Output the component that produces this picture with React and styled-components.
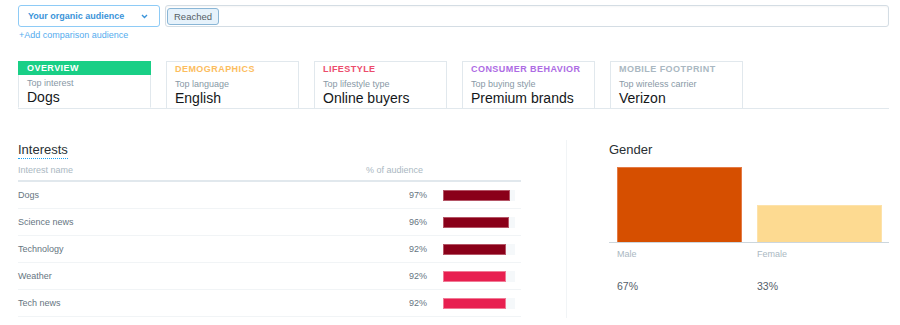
import React from 'react';
import styled, { createGlobalStyle } from 'styled-components';

const Global = createGlobalStyle`
  body {
    margin: 0;
    background: #fff;
    font-family: "Liberation Sans", Arial, sans-serif;
    color: #292f33;
  }
`;

const Page = styled.div`
  padding: 5px 11px 0 18px;
`;

const TopRow = styled.div`
  display: flex;
  align-items: flex-start;
  gap: 5px;
`;

const Select = styled.div`
  box-sizing: border-box;
  width: 142px;
  height: 22px;
  border: 1px solid #8ecbf6;
  border-radius: 3px;
  display: flex;
  align-items: center;
  justify-content: space-between;
  padding: 0 11px 0 9px;
  font-size: 9px;
  font-weight: bold;
  color: #3b94d9;
`;

const Search = styled.div`
  box-sizing: border-box;
  flex: 1;
  height: 22px;
  border: 1px solid #d4dde4;
  border-radius: 3px;
  box-shadow: inset 0 1px 2px rgba(0,0,0,.04);
  display: flex;
  align-items: center;
  padding-left: 1px;
`;

const Tag = styled.span`
  box-sizing: border-box;
  height: 17px;
  line-height: 15px;
  padding: 0 6px;
  background: #e6f2fb;
  border: 1px solid #8ab6d6;
  border-radius: 3px;
  font-size: 9.5px;
  color: #555e66;
`;

const AddLink = styled.div`
  margin-top: 2px;
  padding-left: 1px;
  font-size: 9px;
  line-height: 12px;
  color: #55acee;
`;

const Tabs = styled.div`
  display: flex;
  gap: 15px;
  margin-top: 20px;
  border-bottom: 1px solid #e1e8ed;
`;

const Tab = styled.div`
  box-sizing: border-box;
  width: 133px;
  height: 47px;
  border: 1px solid #e1e8ed;
  border-bottom: ${p => (p.$active ? '1px solid #fff' : 'none')};
  margin-bottom: ${p => (p.$active ? '-1px' : '0')};
`;

const TabHead = styled.div`
  height: 14px;
  line-height: 14px;
  margin: ${p => (p.$active ? '-1px -1px 0' : '0')};
  padding-left: ${p => (p.$active ? '9px' : '8px')};
  background: ${p => (p.$active ? '#19cf86' : 'transparent')};
  color: ${p => (p.$active ? '#fff' : p.$color)};
  font-size: 9px;
  font-weight: bold;
  letter-spacing: 0.45px;
  text-transform: uppercase;
`;

const TabSub = styled.div`
  margin-top: 2px;
  padding-left: 8px;
  font-size: 9px;
  line-height: 12px;
  color: #8899a6;
`;

const TabValue = styled.div`
  padding-left: 8px;
  font-size: 14px;
  line-height: 17px;
  color: #14171a;
`;

const Lower = styled.div`
  display: flex;
  margin-top: 31px;
`;

const Left = styled.div`
  width: 503px;
`;

const Divider = styled.div`
  width: 1px;
  height: 178px;
  margin: 0 42px 0 45px;
  background: #f1f4f6;
`;

const Right = styled.div`
  width: 280px;
`;

const Title = styled.span`
  display: inline-block;
  font-size: 13px;
  line-height: 16px;
  color: #292f33;
  margin-top: ${p => (p.$dotted ? '0' : '-1px')};
  border-bottom: ${p => (p.$dotted ? '1px dotted #1da1f2' : 'none')};
`;

const Grid = styled.div`
  display: grid;
  grid-template-columns: 1fr 100px 72px;
  column-gap: 16px;
  padding-right: 6px;
  align-items: center;
`;

const HeadRow = styled(Grid)`
  margin-top: 5px;
  padding-bottom: 4px;
  border-bottom: 2px solid #e1e8ed;
  font-size: 9px;
  line-height: 12px;
  color: #aab8c2;
`;

const HeadPct = styled.span`
  text-align: right;
  padding-right: 4px;
`;

const Row = styled(Grid)`
  box-sizing: border-box;
  height: 27px;
  border-bottom: 1px solid #f1f4f6;
  font-size: 9px;
  color: #66757f;
`;

const Pct = styled.span`
  text-align: right;
`;

const Track = styled.div`
  height: 11px;
  background: #f5f8fa;
`;

const Bar = styled.div`
  box-sizing: border-box;
  height: 11px;
  background: ${p => p.$color};
  border: 1px solid ${p => p.$edge};
`;

const Chart = styled.div`
  display: grid;
  grid-template-columns: 1fr 1fr;
  margin-top: 9px;
`;

const Col = styled.div`
  display: flex;
  flex-direction: column;
`;

const BarArea = styled.div`
  height: 75px;
  display: flex;
  align-items: flex-end;
  padding: 0 7px 0 8px;
  border-bottom: 1px solid #ccd6dd;
`;

const GBar = styled.div`
  box-sizing: border-box;
  width: 100%;
  background: ${p => p.$color};
  border: 1px solid ${p => p.$edge};
  border-bottom: none;
`;

const GLabel = styled.div`
  margin-top: 5px;
  padding-left: 8px;
  font-size: 9px;
  line-height: 12px;
  color: #aab8c2;
`;

const GValue = styled.div`
  margin-top: 19px;
  padding-left: 8px;
  font-size: 10.5px;
  line-height: 14px;
  color: #55606a;
`;

const tabs = [
  { head: 'Overview', color: '#fff', sub: 'Top interest', value: 'Dogs', active: true },
  { head: 'Demographics', color: '#fcbd5e', sub: 'Top language', value: 'English' },
  { head: 'Lifestyle', color: '#ec4c6c', sub: 'Top lifestyle type', value: 'Online buyers' },
  { head: 'Consumer behavior', color: '#ad6be4', sub: 'Top buying style', value: 'Premium brands' },
  { head: 'Mobile footprint', color: '#aab8c2', sub: 'Top wireless carrier', value: 'Verizon' },
];

const interests = [
  { name: 'Dogs', pct: 97, dark: true },
  { name: 'Science news', pct: 96, dark: true },
  { name: 'Technology', pct: 92, dark: true },
  { name: 'Weather', pct: 92 },
  { name: 'Tech news', pct: 92 },
];

const gender = [
  { label: 'Male', pct: 67, color: '#d64f00', edge: '#e47a45' },
  { label: 'Female', pct: 33, color: '#fdda91', edge: '#fde2aa' },
];

export default function App() {
  return (
    <Page>
      <Global />
      <TopRow>
        <Select>
          <span>Your organic audience</span>
          <svg width="7" height="5" viewBox="0 0 7 5">
            <path d="M1 1l2.5 2.5L6 1" fill="none" stroke="#3b94d9" strokeWidth="1.4" />
          </svg>
        </Select>
        <Search>
          <Tag>Reached</Tag>
        </Search>
      </TopRow>
      <AddLink>+Add comparison audience</AddLink>

      <Tabs>
        {tabs.map((t, i) => (
          <Tab key={i} $active={t.active}>
            <TabHead $active={t.active} $color={t.color}>{t.head}</TabHead>
            <TabSub>{t.sub}</TabSub>
            <TabValue>{t.value}</TabValue>
          </Tab>
        ))}
      </Tabs>

      <Lower>
        <Left>
          <Title $dotted>Interests</Title>
          <HeadRow>
            <span>Interest name</span>
            <HeadPct>% of audience</HeadPct>
            <span />
          </HeadRow>
          {interests.map((it, i) => (
            <Row key={i}>
              <span>{it.name}</span>
              <Pct>{it.pct}%</Pct>
              <Track>
                <Bar
                  style={{ width: Math.round(it.pct * 0.69) }}
                  $color={it.dark ? '#8a0019' : '#e81f50'}
                  $edge={it.dark ? '#b45566' : '#f07a95'}
                />
              </Track>
            </Row>
          ))}
        </Left>
        <Divider />
        <Right>
          <Title>Gender</Title>
          <Chart>
            {gender.map((g, i) => (
              <Col key={i}>
                <BarArea>
                  <GBar style={{ height: Math.round(g.pct * 1.12) }} $color={g.color} $edge={g.edge} />
                </BarArea>
                <GLabel>{g.label}</GLabel>
                <GValue>{g.pct}%</GValue>
              </Col>
            ))}
          </Chart>
        </Right>
      </Lower>
    </Page>
  );
}
